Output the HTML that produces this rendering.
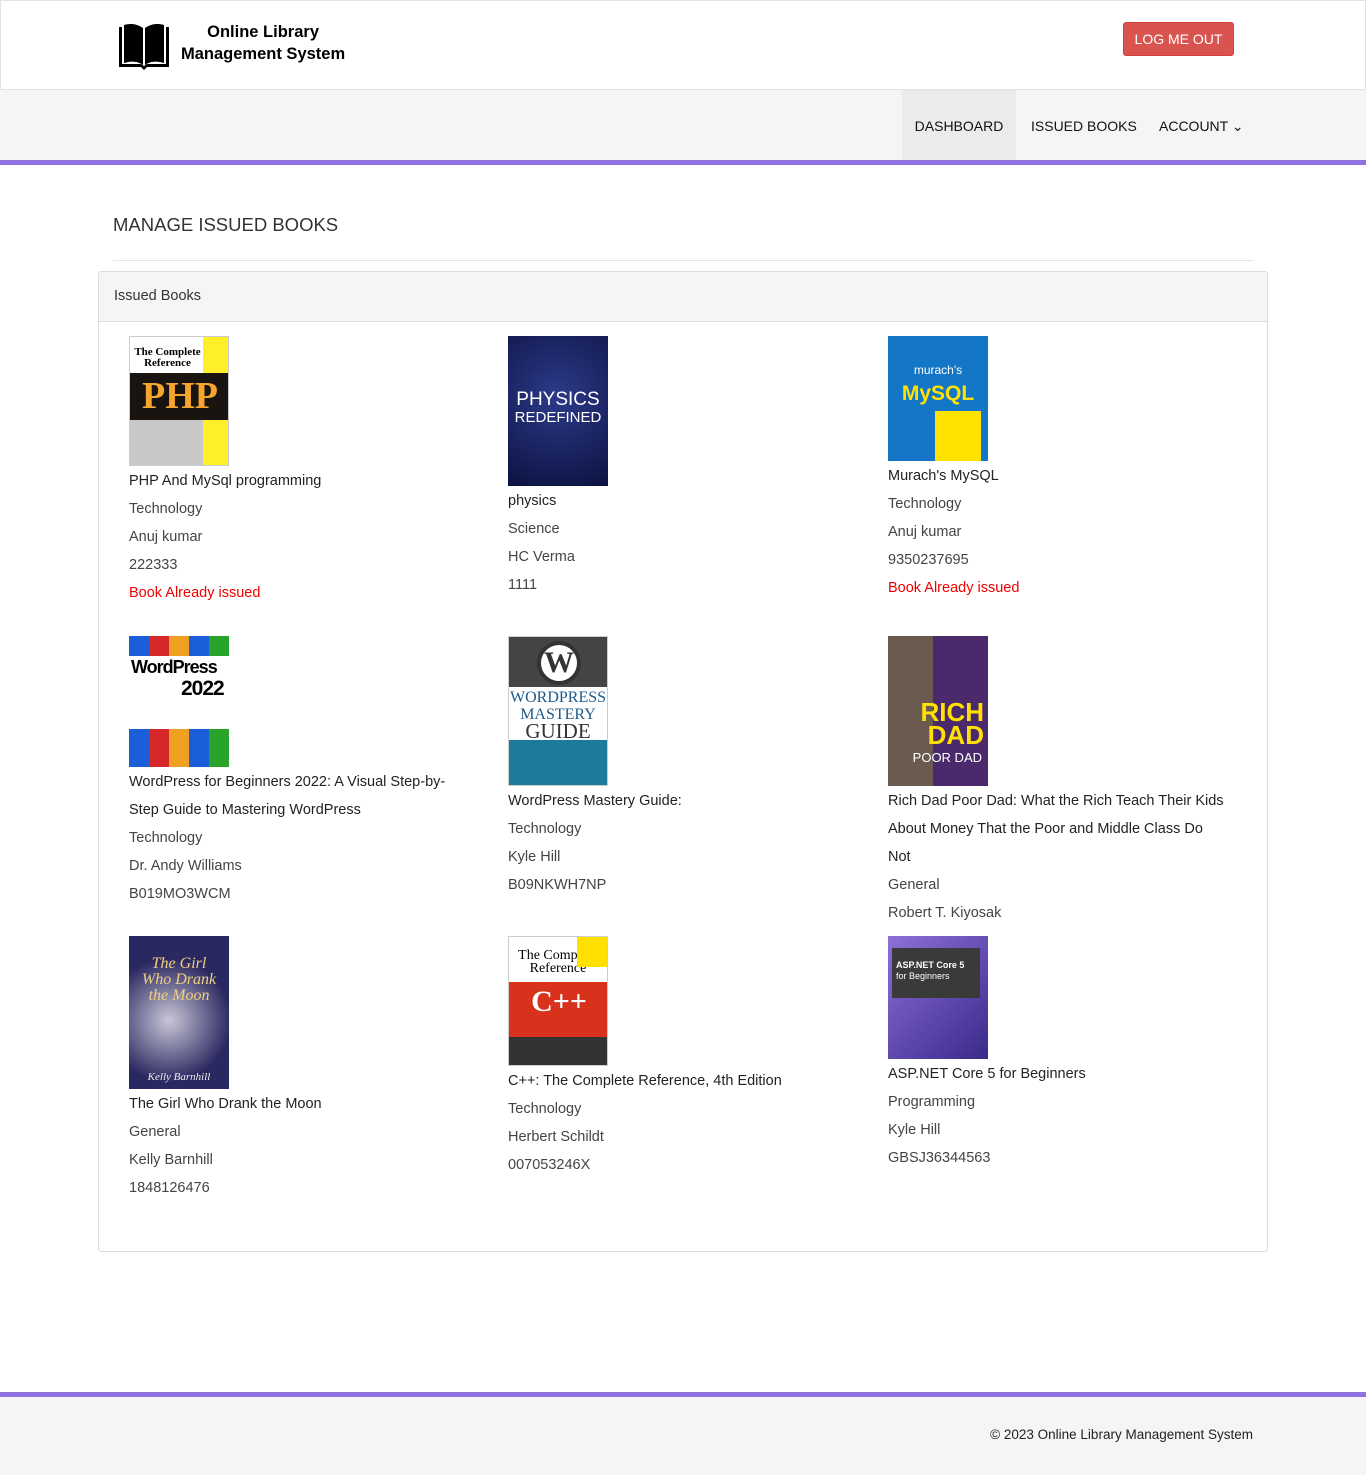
<!DOCTYPE html>
<html><head><meta charset="utf-8"><style>
*{box-sizing:border-box;margin:0;padding:0}
body{width:1366px;height:1475px;background:#fff;font-family:"Liberation Sans",sans-serif;font-size:14.5px;color:#333;position:relative;overflow:hidden}
.top{position:absolute;left:0;top:0;width:1366px;height:90px;border:1px solid #e2e2e2;background:#fff}
.logo{position:absolute;left:116px;top:20px}
.brand{position:absolute;left:180px;top:20px;font-weight:bold;font-size:16.5px;color:#000;line-height:22px;text-align:center}
.btn{position:absolute;left:1122px;top:21px;width:111px;height:34px;background:#d9534f;border:1px solid #d43f3a;border-radius:3px;color:#fff;font-size:14px;line-height:32px;text-align:center}
.nav{position:absolute;left:0;top:90px;width:1366px;height:75px;background:#f5f5f5;border-bottom:5px solid #9170e0}
.nav div{position:absolute;top:0;height:70px;line-height:72px;font-size:14px;color:#111}
h4{position:absolute;left:113px;top:214px;font-size:18.5px;font-weight:normal;color:#333}
.hr{position:absolute;left:113px;top:260px;width:1140px;border-top:1px solid #e5e5e5}
.panel{position:absolute;left:98px;top:271px;width:1170px;height:981px;border:1px solid #ddd;border-radius:3px}
.ph{height:50px;background:#f5f5f5;border-bottom:1px solid #ddd;padding-left:15px;line-height:48px;font-size:14.5px}
.b{position:absolute;width:355px;line-height:28px;color:#444}
.b>div:not(.cv){position:relative;top:1px}
.b .t{color:#222}
.b .r{color:#e00}
.cv{width:100px;overflow:hidden;position:relative;color:#fff;text-align:center}
.foot{position:absolute;left:0;top:1392px;width:1366px;height:83px;background:#f5f5f5;border-top:5px solid #9170e0}
.foot span{position:absolute;right:113px;top:30px;font-size:13.5px;color:#222}
</style></head><body>
<div class="top">
<svg class="logo" width="54" height="50" viewBox="0 0 54 50"><path d="M2 6v40h22l3 3 3-3h22V6h-3v37H30l-3 2-3-2H5V6z" fill="#000"/><path d="M7 4c7-2 13-1 19 3v37c-6-4-12-4-19-2z M28 7c6-4 12-5 19-3v38c-7-2-13-2-19 2z" fill="#000"/></svg>
<div class="brand">Online Library<br>Management System</div>
<div class="btn">LOG ME OUT</div>
</div>
<div class="nav">
<div style="left:902px;width:114px;background:#ebebeb;text-align:center">DASHBOARD</div>
<div style="left:1031px">ISSUED BOOKS</div>
<div style="left:1159px">ACCOUNT &#8964;</div>
</div>
<h4>MANAGE ISSUED BOOKS</h4>
<div class="hr"></div>
<div class="panel"><div class="ph">Issued Books</div></div>

<div class="b" style="left:129px;top:336px">
<div class="cv" style="height:130px;background:#fff;border:1px solid #ccc"><div style="position:absolute;left:0;top:0;width:75px;height:36px;color:#000;font:bold 11px 'Liberation Serif',serif;line-height:11px;padding-top:10px">The Complete Reference</div><div style="position:absolute;right:0;top:0;width:25px;height:36px;background:#ffef2a"></div><div style="position:absolute;top:36px;left:0;width:100px;height:47px;background:#1a1410;color:#f6a430;font:bold 38px 'Liberation Serif',serif;line-height:47px">PHP</div><div style="position:absolute;top:83px;width:75px;height:47px;background:#c8c8c8"></div><div style="position:absolute;top:83px;right:0;width:25px;height:47px;background:#ffef2a"></div></div>
<div class="t">PHP And MySql programming</div><div>Technology</div><div>Anuj kumar</div><div>222333</div><div class="r">Book Already issued</div></div>

<div class="b" style="left:508px;top:336px">
<div class="cv" style="height:150px;background:radial-gradient(circle at 50% 40%,#2c3a8a,#0c1240);font-size:19px;line-height:17px;padding-top:55px">PHYSICS<br><span style="font-size:15px">REDEFINED</span></div>
<div class="t">physics</div><div>Science</div><div>HC Verma</div><div>1111</div></div>

<div class="b" style="left:888px;top:336px">
<div class="cv" style="height:125px;background:#1476c6"><div style="padding-top:20px;font-size:12px">murach's</div><div style="color:#ffe200;font-weight:bold;font-size:21px;line-height:20px">MySQL</div><div style="position:absolute;left:47px;top:75px;width:46px;height:50px;background:#ffe200"></div></div>
<div class="t">Murach's MySQL</div><div>Technology</div><div>Anuj kumar</div><div>9350237695</div><div class="r">Book Already issued</div></div>

<div class="b" style="left:129px;top:636px">
<div class="cv" style="height:131px;background:linear-gradient(90deg,#1a5fd8 20%,#d62828 20% 40%,#f0a020 40% 60%,#1a5fd8 60% 80%,#29a329 80%)"><div style="position:absolute;top:20px;left:0;width:100px;height:73px;background:#fff;color:#000;font:bold 18px 'Liberation Sans',sans-serif;line-height:22px;text-align:left;padding-left:2px;letter-spacing:-1px">WordPress<br><span style="font-size:21px;padding-left:50px">2022</span></div></div>
<div class="t">WordPress for Beginners 2022: A Visual Step-by-<br>Step Guide to Mastering WordPress</div><div>Technology</div><div>Dr. Andy Williams</div><div>B019MO3WCM</div></div>

<div class="b" style="left:508px;top:636px">
<div class="cv" style="height:150px;background:#fff;border:1px solid #ccc"><div style="height:50px;background:#444"></div><div style="position:absolute;left:28px;top:4px;width:44px;height:44px;border-radius:50%;background:#fff;border:4px solid #333;color:#333;font:bold 30px 'Liberation Serif',serif;line-height:36px">W</div><div style="color:#1d5a8a;font:16px 'Liberation Serif',serif;line-height:17px;padding-top:2px">WORDPRESS<br>MASTERY<br><span style="color:#333;font-size:21px">GUIDE</span></div><div style="position:absolute;bottom:0;width:100px;height:45px;background:#1d7a9a"></div></div>
<div class="t">WordPress Mastery Guide:</div><div>Technology</div><div>Kyle Hill</div><div>B09NKWH7NP</div></div>

<div class="b" style="left:888px;top:636px">
<div class="cv" style="height:150px;background:linear-gradient(90deg,#6a5a50 45%,#4a2a6a 45%)"><div style="position:absolute;right:4px;top:65px;color:#ffe000;font:bold 26px 'Liberation Sans',sans-serif;line-height:23px;text-align:right">RICH<br>DAD</div><div style="position:absolute;right:6px;top:108px;font-size:13px">POOR DAD</div></div>
<div class="t">Rich Dad Poor Dad: What the Rich Teach Their Kids<br>About Money That the Poor and Middle Class Do<br>Not</div><div>General</div><div>Robert T. Kiyosak</div></div>

<div class="b" style="left:129px;top:936px">
<div class="cv" style="height:153px;background:radial-gradient(circle at 40% 55%,#c9c6d8,#2a2860 60%);font:italic 16px 'Liberation Serif',serif;line-height:16px;padding-top:20px;color:#f0d080">The Girl<br>Who Drank<br>the Moon<div style="position:absolute;bottom:4px;width:100px;font-size:11px;color:#eee">Kelly Barnhill</div></div>
<div class="t">The Girl Who Drank the Moon</div><div>General</div><div>Kelly Barnhill</div><div>1848126476</div></div>

<div class="b" style="left:508px;top:936px">
<div class="cv" style="height:130px;background:#fff;border:1px solid #ccc"><div style="color:#000;font:14px 'Liberation Serif',serif;line-height:13px;padding-top:12px">The Complete Reference</div><div style="position:absolute;right:0;top:0;width:30px;height:30px;background:#ffe000"></div><div style="position:absolute;top:45px;width:100px;height:55px;background:#d8311c;font:bold 30px 'Liberation Serif',serif;line-height:40px;color:#fff">C++</div><div style="position:absolute;top:100px;width:100px;height:30px;background:#333"></div></div>
<div class="t">C++: The Complete Reference, 4th Edition</div><div>Technology</div><div>Herbert Schildt</div><div>007053246X</div></div>

<div class="b" style="left:888px;top:936px">
<div class="cv" style="height:123px;background:linear-gradient(135deg,#8e6fd8,#3a2a8a)"><div style="position:absolute;left:4px;top:12px;width:88px;height:50px;background:#3a3a3a;text-align:left;padding:12px 0 0 4px;font-size:9px;line-height:11px"><b>ASP.NET Core 5</b><br>for Beginners</div></div>
<div class="t">ASP.NET Core 5 for Beginners</div><div>Programming</div><div>Kyle Hill</div><div>GBSJ36344563</div></div>

<div class="foot"><span>© 2023 Online Library Management System</span></div>
</body></html>
